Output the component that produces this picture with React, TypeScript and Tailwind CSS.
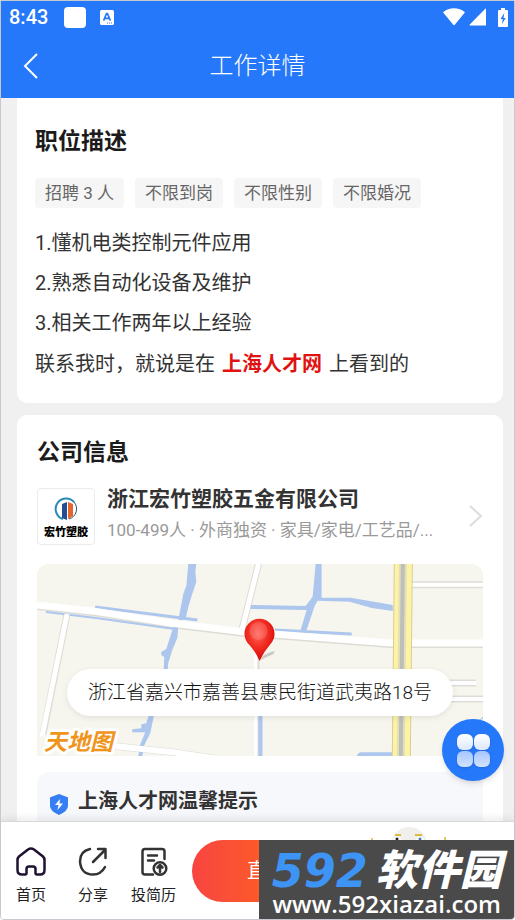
import type { ReactNode } from "react";

const tags = ["招聘 3 人", "不限到岗", "不限性别", "不限婚况"];

const duties = ["1.懂机电类控制元件应用", "2.熟悉自动化设备及维护", "3.相关工作两年以上经验"];

function StatusBar() {
  return (
    <div className="flex h-8 items-center pl-2 pr-1.5">
      <span className="text-xl font-medium leading-none">8:43</span>
      <span className="ml-4 h-[21px] w-[22px] rounded bg-white" />
      <svg className="ml-3.5" width="14" height="15" viewBox="0 0 14 15">
        <rect width="14" height="15" rx="1.5" fill="#fff" />
        <path d="M3.6 10.6 6.5 3.6h1l2.9 7M4.8 8.4h4.4" fill="none" stroke="#2678fa" strokeWidth="1.6" />
        <path d="M7 13h1M9 13h1M11 13h1" stroke="#2678fa" strokeWidth="1" />
      </svg>
      <div className="ml-auto flex items-center">
        <svg width="22" height="18" viewBox="0 0 22 18" fill="#fff">
          <path d="M0 4.2C6-1 16-1 22 4.2L12 16.6Q11 18 10 16.6Z" />
        </svg>
        <svg className="ml-1" width="17" height="18" viewBox="0 0 17 18" fill="#fff">
          <path d="M16 1Q17 0 17 1.500V17.500H1Q0 17.500 .8 16.500Z" />
        </svg>
        <svg className="ml-3" width="10" height="19" viewBox="0 0 10 19">
          <path d="M3 0h4v2h2q1 0 1 1v15q0 1-1 1H1q-1 0-1-1V3q0-1 1-1h2z" fill="#fff" />
          <path d="M6.300 5 2.500 11h2.200L4 16l3.700-6H5.500z" fill="#2678fa" />
        </svg>
      </div>
    </div>
  );
}

function MapDrawing() {
  return (
    <svg className="h-48 w-full" viewBox="0 0 445 192" preserveAspectRatio="xMidYMid slice">
      <defs>
        <radialGradient id="pin" cx="0.45" cy="0.35" r="0.7">
          <stop offset="0" stopColor="#ff6659" />
          <stop offset="0.5" stopColor="#f12a20" />
          <stop offset="1" stopColor="#cf0303" />
        </radialGradient>
      </defs>
      <rect width="445" height="192" fill="#f6f6ee" />

      {/* Roads, a grey edge under a white bed */}
      <g fill="none" stroke="#dddcd6" strokeLinejoin="round">
        <path d="M0 42 55 48 133 60 208 69 353 80H445" strokeWidth="8" />
        <path d="M30 50 6 170" strokeWidth="7" />
        <path d="M221 0 204 68" strokeWidth="7" />
        <path d="M219 75V192" strokeWidth="6" />
        <path d="M374 21H445M400 135H445M400 119H438" strokeWidth="7" />
        <path d="M60 180l76 8 40 6" strokeWidth="7" />
      </g>

      {/* Waterways */}
      <g fill="none" stroke="#acc6ee" strokeLinejoin="round">
        <path d="M151 0h8l-1 8 1 10-5 15-3 10-3 13h-7l5-26 3-8z" fill="#acc6ee" stroke="none" />
        <path d="M136 63h5l-1 11-5 12-4 13-1 12-4 1 1-19-3-2v-3l5-3z" fill="#acc6ee" stroke="none" />
        <path d="M112 150h5l-4 19-6 12-2 11h-4l2-12 5-12H95v-3l9-1v-4l5-1z" fill="#acc6ee" stroke="none" />
        <path d="M58 43 160 56" strokeWidth="3" />
        <path d="M9 48l50 6 78 11" strokeWidth="2" />
        <path d="M278 0h6v34l29 0 42 7v6l-21-3-22-6-32-1-3 5-8 24h-6l6-20-3 0-53-1v-4l55 1 7-9z" fill="#acc6ee" stroke="none" />
        <path d="M223 120v72" strokeWidth="4" />
        <path d="M237 66l77 4" strokeWidth="3" />
        <path d="M319 192q1-4 5-4h31v4z" fill="#acc6ee" stroke="none" />
        <path d="M442 156l3-3v39" strokeWidth="1" />
      </g>

      <g fill="none" stroke="#fff" strokeLinejoin="round">
        <path d="M0 41 55 47 133 59 208 68 353 79H445" strokeWidth="7" />
        <path d="M30 50 5 172" strokeWidth="5" />
        <path d="M221 0 204 68" strokeWidth="5" />
        <path d="M218 75V192" strokeWidth="4" />
        <path d="M374 21H445M400 135H445M400 119H438" strokeWidth="4" />
        <path d="M60 180l76 8 40 6" strokeWidth="6" />
      </g>

      {/* Highway */}
      <path d="M356 0h19l-2 192h-19z" fill="#d9cd96" />
      <path d="M357 0h17l-2 192h-17z" fill="#fdf3a4" />
      <path d="M361 0h8l-2 192h-8z" fill="#e3dfb8" />
      <path d="M363 0h4l-2 192h-4z" fill="#bdbfbb" />

      {/* Pin and its shadow */}
      <path d="M223 96q2-6 14-9l-1 3q-7 3-13 6z" fill="#888" opacity="0.4" />
      <path d="M222 97Q219 89 212 81A15 15 0 1 1 233 80Q226 88 222 97z" fill="url(#pin)" />
      <ellipse cx="221" cy="67" rx="9" ry="9" fill="#fff" opacity="0.14" />
    </svg>
  );
}

function TabButton({ label, children }: { label: string; children: ReactNode }) {
  return (
    <button className="flex flex-col items-center gap-2 text-[15px] leading-5 text-[#222]">
      <svg width="30" height="30" viewBox="0 0 30 30" fill="none" strokeWidth="2.5" strokeLinecap="round" strokeLinejoin="round">
        {children}
      </svg>
      {label}
    </button>
  );
}

export default function App() {
  return (
    <div className="relative flex h-screen flex-col overflow-hidden rounded-b border border-[#c6cad0] bg-[#f0f0f1] font-['Roboto','Noto_Sans_CJK_SC',sans-serif] text-[#333]">
      {/* Header */}
      <header className="shrink-0 bg-[#2678fa] text-white">
        <StatusBar />
        <div className="relative flex h-[65px] items-center justify-center">
          <button aria-label="返回" className="absolute left-5 top-5">
            <svg width="18" height="26" viewBox="0 0 18 26" fill="none" stroke="#fff" strokeWidth="2">
              <path d="M16 1 4 13l12 12" />
            </svg>
          </button>
          <h1 className="text-2xl font-light">工作详情</h1>
        </div>
      </header>

      <main className="min-h-0 flex-1 overflow-hidden pl-4 pr-[11px]">
        {/* Job description */}
        <section className="rounded-b-[10px] bg-white px-[18px] pb-[18px] pt-7">
          <h2 className="text-[23px] font-bold leading-8 text-[#1b1b1b]">职位描述</h2>
          <ul className="mt-5 flex gap-[11px]">
            {tags.map((tag) => (
              <li key={tag} className="rounded-sm bg-[#f6f6f6] px-2.5 text-[17px] leading-[30px] text-[#666]">
                {tag}
              </li>
            ))}
          </ul>
          <div className="mt-[15px] text-xl leading-10">
            {duties.map((duty) => (
              <p key={duty}>{duty}</p>
            ))}
            <p className="leading-[42px]">
              联系我时，就说是在{" "}
              <a href="#site" className="mx-0.5 font-bold text-[#e01212]">
                上海人才网
              </a>{" "}
              上看到的
            </p>
          </div>
        </section>

        {/* Company */}
        <section className="mt-3 rounded-[10px] bg-white px-5 pt-[22px]">
          <h2 className="text-[23px] font-bold leading-8 text-[#1b1b1b]">公司信息</h2>
          <a href="#company" className="mt-4 flex items-center">
            <div className="flex h-[57px] w-[58px] shrink-0 flex-col items-center justify-end rounded border border-[#ebebeb] pb-1">
              <svg width="24" height="24" viewBox="0 0 24 24">
                <path d="M9 22A10.500 10.500 0 1 1 20 5" fill="none" stroke="#268bb5" strokeWidth="2" />
                <path d="M20 5a10.500 10.500 0 0 1-5 17" fill="none" stroke="#304a80" strokeWidth="1" />
                <path d="M8 7l5-2v18l-5-2z" fill="#244e92" />
                <path d="M13 5h1v18h-1z" fill="#fff" />
                <path d="M14 5l5 2v12l-5 3z" fill="#e5652d" />
              </svg>
              <span className="mt-1 text-[11px] font-black leading-[15px] text-black">宏竹塑胶</span>
            </div>
            <div className="ml-3 min-w-0 flex-1">
              <h3 className="text-[21px] font-bold leading-7">浙江宏竹塑胶五金有限公司</h3>
              <p className="truncate text-[17px] leading-[34px] text-[#999]">100-499人 · 外商独资 · 家具/家电/工艺品/...</p>
            </div>
            <svg width="14" height="22" viewBox="0 0 14 22" fill="none" stroke="#ddd" strokeWidth="2">
              <path d="M1 1l11 10L1 21" />
            </svg>
          </a>

          <div className="relative mt-[17px] overflow-hidden rounded-t-xl">
            <MapDrawing />
            <p className="absolute inset-x-[30px] top-[105px] rounded-full bg-white text-center text-[19px] font-light leading-[47px] text-[#111] shadow-[0_2px_6px_rgba(0,0,0,0.08)]">
              浙江省嘉兴市嘉善县惠民街道武夷路18号
            </p>
            <svg className="absolute bottom-0 left-1" width="80" height="32" viewBox="0 0 80 32">
              <text x="3" y="26" fontSize="23" fontWeight="700" fontStyle="italic" fill="#f0951c" stroke="#fff" strokeWidth="6" strokeLinejoin="round" paintOrder="stroke">
                天地图
              </text>
            </svg>
          </div>

          <div className="mt-4 flex items-start gap-[9px] rounded-xl bg-[#f7f8fb] px-3 pb-10 pt-3.5">
            <svg className="mt-2" width="20" height="21" viewBox="0 0 20 21">
              <path d="M10 0 18 3q1 0 1 1v8q0 5-9 9-9-4-9-9V4q0-1 1-1z" fill="#367ef3" />
              <path d="M11 5l-5 6h3.500L8.500 16 14 9.500h-3.500z" fill="#fff" />
            </svg>
            <h3 className="text-xl font-bold leading-[30px]">上海人才网温馨提示</h3>
          </div>
        </section>
      </main>

      {/* Floating menu */}
      <button aria-label="菜单" className="absolute bottom-[138px] right-2.5 flex size-[62px] items-center justify-center rounded-full bg-[#2678fa] shadow-md">
        <span className="grid grid-cols-2 gap-px">
          <span className="size-4 rounded-[6px] bg-linear-to-b from-white to-[#dce8ff] shadow-sm" />
          <span className="size-4 rounded-[6px] bg-linear-to-b from-white to-[#dce8ff] shadow-sm" />
          <span className="size-4 rounded-[6px] bg-linear-to-b from-[#a6c6ff] to-[#d3e2ff] shadow-sm" />
          <span className="size-4 rounded-[6px] bg-linear-to-b from-[#a6c6ff] to-[#d3e2ff] shadow-sm" />
        </span>
      </button>

      {/* Bottom bar */}
      <footer className="relative flex h-[98px] shrink-0 items-start border-t border-[#d8d8d8] bg-white pl-[15px] pt-[18px] shadow-[0_-3px_8px_rgba(0,0,0,0.08)]">
        <nav className="flex gap-[23px] pt-[7px]">
          <div className="flex gap-8">
            <TabButton label="首页">
              <path stroke="#1f1231" d="M6 27.500q-4.500 0-4.500-4.500V13q0-2 1.500-3.500l9-7q3-2 6 0l9 7q1.500 1.500 1.500 3.500v10q0 4.500-4.500 4.500h-3q-1.500 0-1.500-1.500V22q0-2.500-2.500-2.500h-4q-2.500 0-2.500 2.500v4q0 1.500-1.500 1.500z" />
            </TabButton>
            <TabButton label="分享">
              <path stroke="#333" d="M12 2Q2 4 2 14.500 3 27.500 15 27.500q8 0 12-7.500M20 2h7.500v9M26 4 15 15" />
            </TabButton>
          </div>
          <TabButton label="投简历">
            <path stroke="#333" d="M14 27.500H6q-2.500 0-2.500-2.500V4.500Q3.500 2 6 2h17q2.500 0 2.500 2.500V12M9 8.500h9M9 13.500h6" />
            <circle cx="21" cy="21.500" r="6.300" stroke="#333" />
            <path stroke="#333" d="M21 25v-6.500M18.500 20.500 21 18l2.500 2.500" />
          </TabButton>
        </nav>
        <button className="ml-4 h-[62px] flex-1 rounded-l-full bg-linear-to-r from-[#f84440] to-[#ff6502] to-35% pl-[55px] text-left text-xl text-white">
          直
        </button>
        <svg className="absolute right-[63px] top-1" width="80" height="20" viewBox="0 0 80 20">
          <ellipse cx="38" cy="19" rx="18" ry="18" fill="#f0efec" />
          <path d="M24 9h6M44 9h7" stroke="#d8bd42" strokeWidth="2" />
          <circle cx="26" cy="16" r="5" fill="#fff" />
          <circle cx="49" cy="16" r="5" fill="#fff" />
          <circle cx="26" cy="13" r="1.500" fill="#222" />
          <circle cx="49" cy="13" r="1.500" fill="#4678c4" />
          <path d="M1 12v4M74 11v4" stroke="#e3ca68" strokeWidth="2" />
        </svg>
      </footer>

      {/* Download site label */}
      <div className="absolute -bottom-px -right-px h-20 w-1/2 bg-[#4a4a4a] text-white">
        <div className="flex items-center justify-center gap-2 pt-2.5 text-[42px] font-black italic leading-[42px]">
          <span className="font-['DejaVu_Sans',sans-serif] text-[46px] text-[#3d94f5]">592</span>
          <span>软件园</span>
        </div>
        <p className="text-center font-['Open_Sans',sans-serif] text-2xl font-semibold leading-6">www.592xiazai.com</p>
      </div>
    </div>
  );
}
